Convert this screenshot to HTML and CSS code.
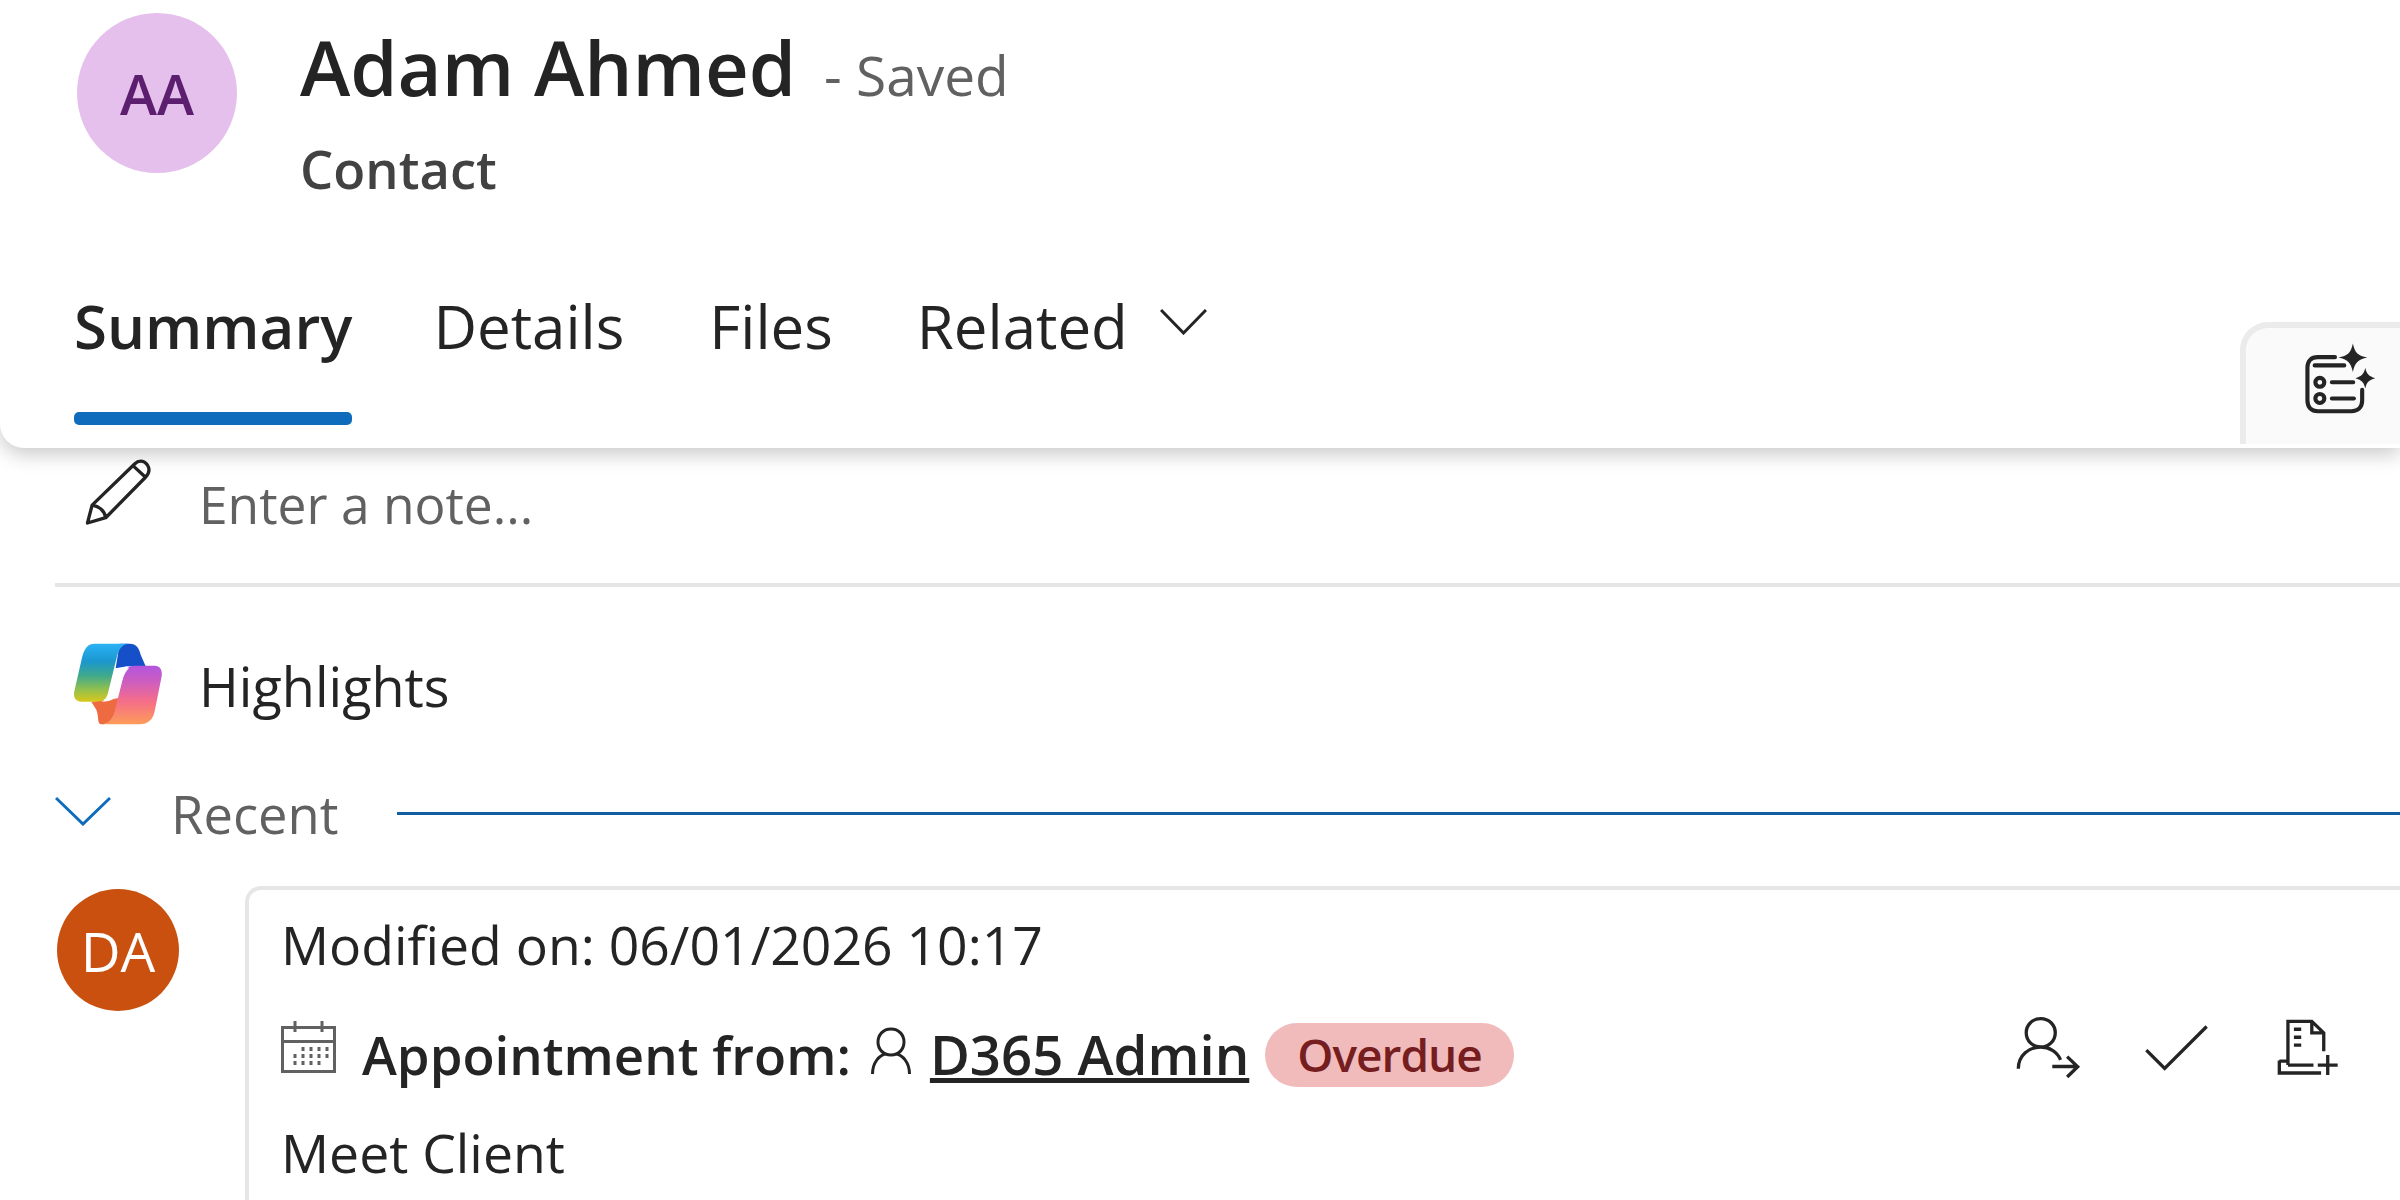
FILE: index.html
```html
<!DOCTYPE html>
<html lang="en">
<head>
<meta charset="utf-8">
<title>Adam Ahmed - Contact</title>
<link rel="stylesheet" href="styles.css">
</head>
<body>
<header class="header">
  <div class="identity">
    <div class="avatar avatar-aa">AA</div>
    <div class="identity-text">
      <div class="title-row"><h1 class="name">Adam Ahmed</h1><span class="saved">- Saved</span></div>
      <div class="entity">Contact</div>
    </div>
  </div>
  <nav class="tabs">
    <a class="tab tab-active">Summary</a>
    <a class="tab">Details</a>
    <a class="tab tab-files">Files</a>
    <a class="tab tab-related">Related
      <svg class="tab-chevron" viewBox="0 0 47 26"><path d="M1 1 L23.500 24 L46 1"/></svg>
    </a>
    <div class="side-tab">
      <svg class="side-icon" viewBox="315 130 215 215">
        <path class="i-stroke" d="M405 177 H355 C336 177 325 188 325 207 V303 C325 322 336 334 355 334 H453 C472 334 484 322 484 303 V272"/>
        <path class="i-stroke" d="M346 201 H432 M396 250 H458 M396 297 H460"/>
        <circle class="i-stroke" cx="361" cy="250" r="13"/>
        <circle class="i-stroke" cx="361" cy="297" r="13"/>
        <path class="i-fill" d="M457 137 C463 165 472 172 499 178 C472 184 463 192 457 220 C451 192 442 184 415 178 C442 172 451 165 457 137Z"/>
        <path class="i-fill" d="M493 208 C497 226 503 233 522 238 C503 243 497 250 493 268 C489 250 483 243 464 238 C483 233 489 226 493 208Z"/>
      </svg>
    </div>
  </nav>
</header>

<main class="content">
  <div class="note-row">
    <svg class="pencil" viewBox="130 85 210 205"><path d="M143 278 L157 224 L285 100 C300 85 320 90 327 110 C331 122 325 133 318 140 L198 262 Z M157 224 C178 227 195 241 198 262 M280 105 L318 140"/></svg>
    <span class="note-text">Enter a note...</span>
  </div>

  <div class="highlights">
    <svg class="copilot" viewBox="100 640 270 246">
      <defs>
        <linearGradient id="cpLeft" x1="0" y1="0" x2="0" y2="1">
          <stop offset="0" stop-color="#2bb2f6"/><stop offset=".3" stop-color="#1a97cf"/><stop offset=".55" stop-color="#3fa98c"/><stop offset=".78" stop-color="#8fbf50"/><stop offset="1" stop-color="#d9c81a"/>
        </linearGradient>
        <linearGradient id="cpRight" x1="0" y1="0" x2="0" y2="1">
          <stop offset="0" stop-color="#b255de"/><stop offset=".3" stop-color="#d05fbc"/><stop offset=".6" stop-color="#f56d8a"/><stop offset="1" stop-color="#fd9c58"/>
        </linearGradient>
      </defs>
      <path fill="#1650c8" d="M240 642 H270 C290 642 298 655 303 675 L318 710 H262 L228 716 Z"/>
      <path fill="#ee6a40" d="M155 816 L240 805 L226 850 C218 872 205 884 185 884 C172 884 178 860 170 840 Z"/>
      <path fill="url(#cpLeft)" d="M165 642 H270 C250 642 238 655 232 680 L205 790 C200 810 190 816 165 816 H125 C108 816 100 803 104 785 L128 680 C135 655 145 642 165 642Z"/>
      <path fill="url(#cpRight)" d="M285 708 H345 C360 708 369 720 366 740 L345 845 C340 870 325 884 300 884 H185 C205 884 218 870 225 845 L250 745 C255 722 262 708 285 708Z"/>
      <path fill="#fff" d="M228 716 H268 C254 728 246 755 240 780 C235 803 218 816 185 816 C198 812 205 800 209 782 L220 735 C222 726 224 720 228 716Z"/>
    </svg>
    <span class="highlights-text">Highlights</span>
  </div>

  <div class="recent">
    <svg class="recent-chevron" viewBox="0 0 56 30"><path d="M1 2 L28 28 L55 2"/></svg>
    <span class="recent-text">Recent</span>
    <span class="recent-line"></span>
  </div>

  <div class="timeline-item">
    <div class="avatar avatar-da">DA</div>
    <article class="card">
      <div class="modified">Modified on: 06/01/2026 10:17</div>
      <div class="appt-row">
        <svg class="calendar" viewBox="0 0 55 52">
          <path class="cal-line" d="M1.500 6.500 H53.500 V50.500 H1.500 Z M1.500 20.500 H53.500 M14 0 V11 M41 0 V11"/>
          <path class="cal-dots" d="M22 26 V30 M30 26 V30 M38 26 V30 M46 26 V30 M14 33 V37 M22 33 V37 M30 33 V37 M38 33 V37 M46 33 V37 M14 40 V44 M22 40 V44 M30 40 V44 M38 40 V44"/>
        </svg>
        <b class="appt-label">Appointment from:</b>
        <svg class="person" viewBox="0 0 40 48"><path d="M20 2 C12 2 7 8 7 15 C7 22 12 28 20 28 C28 28 33 22 33 15 C33 8 28 2 20 2Z M1.500 47 C1.500 36 8 28 15 27 M38.500 47 C38.500 36 32 28 25 27"/></svg>
        <a class="owner">D365 Admin</a>
        <span class="badge">Overdue</span>
        <div class="actions">
          <svg class="act-person" viewBox="45 45 200 195"><path d="M120 55 C95 55 76 74 76 98 C76 122 95 141 120 141 C145 141 164 122 164 98 C164 74 145 55 120 55Z M52 207 C52 165 85 141 120 141 C145 141 170 155 180 180 M155 200 H232 M200 170 L232 201 L200 232"/></svg>
          <svg class="act-check" viewBox="430 75 195 140"><path d="M437 153 L492 208 L618 82"/></svg>
          <svg class="act-doc" viewBox="825 70 190 178"><path d="M858 212 V80 H930 L966 115 V170 M930 80 V115 H966 M876 104 H898 M876 128 H898 M876 152 H898 M858 212 H935 M832 200 H858 M832 198 V236 H958 M948 212 H1008 M978 182 V242"/></svg>
        </div>
      </div>
      <div class="subject">Meet Client</div>
    </article>
  </div>
</main>
</body>
</html>
```
FILE: styles.css
```css
* { box-sizing: border-box; }
html, body { margin: 0; width: 2400px; height: 1200px; overflow: hidden; background: #fff; }
body { font-family: "Open Sans", "Noto Sans", sans-serif; color: #242424; }

.header {
  position: relative; z-index: 2; height: 448px; background: #fff;
  border-bottom-left-radius: 24px;
  box-shadow: 0 6px 20px rgba(0,0,0,.22);
}
.identity { display: flex; padding: 13px 0 0 77px; gap: 63px; }
.avatar { flex: none; display: flex; align-items: center; justify-content: center; border-radius: 50%; }
.avatar-aa { width: 160px; height: 160px; background: #e6c0ec; color: #5c1e6e; font-size: 56px; font-weight: 600; }
.identity-text { padding-top: 9px; }
.title-row { display: flex; align-items: baseline; gap: 28px; height: 90px; }
.name { margin: 0; font-size: 76px; font-weight: 600; line-height: 90px; }
.saved { font-size: 55px; color: #616161; }
.entity { margin-top: 27px; font-size: 52.500px; font-weight: 600; line-height: 60px; color: #424242; }

.tabs { position: absolute; left: 0; right: 0; bottom: 0; height: 170px; display: flex; gap: 81px; padding-left: 74px; }
.tab { position: relative; height: 147px; padding-top: 10px; font-size: 60px; line-height: 76px; white-space: nowrap; }
.tab-active { font-weight: 600; }
.tab-files { margin-left: 4px; }
.tab-related { margin-left: 3px; }
.tab-active::after { content: ""; position: absolute; left: 0; right: 0; bottom: 0; height: 13px; background: #0f6cbd; border-radius: 5px; }
.tab-chevron { width: 47px; height: 26px; margin-left: 17px; vertical-align: 14px; fill: none; stroke: #242424; stroke-width: 3; }
.side-tab {
  margin-left: auto; margin-top: 44px; width: 160px; height: 122px; flex: none;
  display: flex; padding: 13px 0 0 58px;
  background: #fafafa; border: 6px solid #ebebeb; border-width: 6px 0 0 6px; border-top-left-radius: 28px;
}
.side-icon { width: 74px; height: 74px; }
.i-stroke { fill: none; stroke: #242424; stroke-width: 12; stroke-linecap: round; }
.i-fill { fill: #242424; }

.content { padding-left: 55px; }
.note-row { display: flex; align-items: center; height: 139px; padding: 0 0 24px 28px; border-bottom: 4px solid #e6e6e6; }
.pencil { width: 70px; height: 68px; margin-bottom: 22px; fill: none; stroke: #242424; stroke-width: 10; stroke-linejoin: round; }
.note-text { margin-left: 46px; font-size: 51.500px; color: #616161; }
.highlights { display: flex; align-items: center; height: 194px; padding-left: 18px; }
.copilot { width: 90px; height: 82px; }
.highlights-text { margin: 4px 0 0 36px; font-size: 54px; }
.recent { display: flex; align-items: center; height: 64px; }
.recent-chevron { width: 56px; height: 30px; flex: none; margin-bottom: 4px; fill: none; stroke: #0f6cbd; stroke-width: 3; }
.recent-text { margin-left: 60px; font-size: 52.500px; color: #616161; }
.recent-line { flex: 1; height: 3px; margin-left: 59px; background: #115ea3; }

.timeline-item { display: flex; margin-top: 41px; align-items: flex-start; }
.avatar-da { margin: 3px 0 0 2px; width: 122px; height: 122px; background: #ca5010; color: #fff; font-size: 55px; }
.card { flex: 1; margin-left: 66px; height: 340px; padding: 23px 0 0 32px; border: 4px solid #e6e6e6; border-width: 4px 0 0 4px; border-top-left-radius: 16px; font-size: 53.500px; }
.modified { line-height: 64px; }
.appt-row { display: flex; align-items: center; height: 76px; margin-top: 39px; }
.calendar { width: 55px; height: 52px; flex: none; margin-top: -14px; }
.cal-line { fill: none; stroke: #616161; stroke-width: 3; }
.cal-dots { fill: none; stroke: #616161; stroke-width: 3; }
.appt-label { margin-left: 26px; font-weight: 600; font-size: 52.700px; }
.person { width: 40px; height: 48px; margin-left: 20px; margin-top: -6px; fill: none; stroke: #242424; stroke-width: 3; }
.owner { margin-left: 19px; font-weight: 600; font-size: 54.500px; text-decoration: underline; }
.badge { margin: 2px 0 0 16px; height: 64px; line-height: 62px; padding: 0 32px; border-radius: 32px; background: #f1bbbc; color: #751d1f; font-size: 46px; font-weight: 600; letter-spacing: -1px; }
.actions { margin-left: auto; display: flex; align-items: center; margin-bottom: 14px; padding-right: 60px; }
.actions svg { fill: none; stroke: #242424; stroke-width: 10; }
.act-person { width: 66px; height: 65px; }
.act-check { width: 65px; height: 47px; margin-left: 62px; }
.act-doc { width: 63px; height: 59px; margin-left: 68px; }
.subject { margin-top: 29px; line-height: 64px; }
```
